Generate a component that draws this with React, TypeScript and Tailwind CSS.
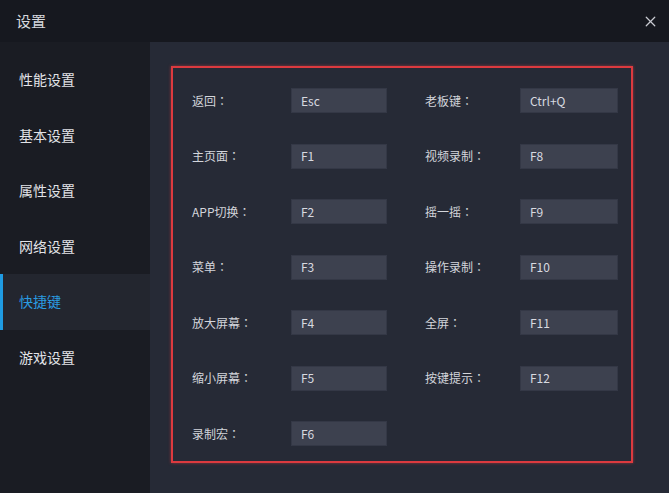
import { X } from "lucide-react";

const menu = ["性能设置", "基本设置", "属性设置", "网络设置", "快捷键", "游戏设置"];

const keys: [string, string, string?, string?][] = [
  ["返回", "Esc", "老板键", "Ctrl+Q"],
  ["主页面", "F1", "视频录制", "F8"],
  ["APP切换", "F2", "摇一摇", "F9"],
  ["菜单", "F3", "操作录制", "F10"],
  ["放大屏幕", "F4", "全屏", "F11"],
  ["缩小屏幕", "F5", "按键提示", "F12"],
  ["录制宏", "F6"],
];

const KeyBox = ({ value, className }: { value: string; className: string }) => (
  <div
    className={`h-[25px] bg-[#3d414f] border border-[#343846] flex items-center pl-[9px] text-[12px] text-[#d8dae0] ${className}`}
  >
    {value}
  </div>
);

const Label = ({ text, className }: { text: string; className: string }) => (
  <span className={className}>
    {text}
    <span style={{ fontFamily: '"Noto Sans CJK TC", sans-serif' }}>：</span>
  </span>
);

const App = () => {
  return (
    <div
      className="w-[669px] h-[493px] bg-[#1a1c23] flex flex-col overflow-hidden"
      style={{ fontFamily: '"Noto Sans CJK SC", "Noto Sans", sans-serif' }}
    >
      <div className="h-[42px] bg-[#16181f] flex items-center justify-between pl-[16px] pr-[10px]">
        <span className="text-[15px] text-[#d6d8de]">设置</span>
        <X className="w-[17px] h-[17px] text-[#c9cbd2]" strokeWidth={1.75} />
      </div>
      <div className="flex flex-1">
        <div className="w-[150px] bg-[#1a1c23] pt-[10px] flex flex-col">
          {menu.map((m) => {
            const active = m === "快捷键";
            return (
              <div
                key={m}
                className={`h-[55.5px] flex items-center pl-[19px] text-[14px] relative ${
                  active ? "bg-[#23262f] text-[#2a9be0]" : "text-[#e2e3e7]"
                }`}
              >
                {active && <div className="absolute left-0 top-0 bottom-0 w-[3px] bg-[#1f9be3]" />}
                {m}
              </div>
            );
          })}
        </div>
        <div className="flex-1 bg-[#262a36] pl-[21px] pt-[24px]">
          <div className="w-[462px] h-[397px] border-2 border-[#dc3a3f] pt-[5px] shadow-[0_0_3px_rgba(220,58,63,0.6)]">
            {keys.map(([l1, v1, l2, v2]) => (
              <div key={l1} className="h-[55.5px] flex items-center text-[12px] text-[#d3d5db]">
                <Label text={l1} className="w-[99px] pl-[19px] box-content" />
                <KeyBox value={v1} className="w-[96px]" />
                {l2 && (
                  <>
                    <Label text={l2} className="w-[95px] ml-[38px]" />
                    <KeyBox value={v2 ?? ""} className="w-[98px]" />
                  </>
                )}
              </div>
            ))}
          </div>
        </div>
      </div>
    </div>
  );
};

export default App;
